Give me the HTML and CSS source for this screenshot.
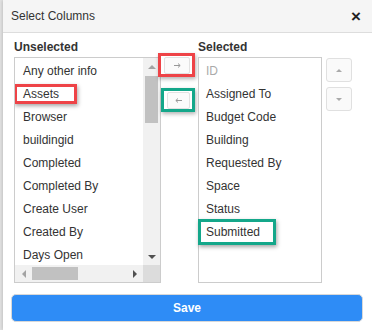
FILE: index.html
```html
<!DOCTYPE html>
<html lang="en">
<head>
  <meta charset="UTF-8" />
  <title>Select Columns</title>
  <link rel="stylesheet" href="styles.css">
</head>
<body>
  <div class="dialog">
    <!-- Header -->
    <div class="dialog__header">
      <span class="dialog__title">Select Columns</span>
      <button class="dialog__close">&times;</button>
    </div>

    <div class="dialog__body">
      <div class="picker">
        <div class="picker__label">Unselected</div>
        <div></div>
        <div class="picker__label picker__label--right">Selected</div>
        <div></div>

        <!-- Unselected list -->
        <div class="listbox listbox--scroll">
          <ul class="listbox__items">
            <li>Any other info</li>
            <li><span class="mark mark--red">Assets</span></li>
            <li>Browser</li>
            <li>buildingid</li>
            <li>Completed</li>
            <li>Completed By</li>
            <li>Create User</li>
            <li>Created By</li>
            <li>Days Open</li>
          </ul>
          <div class="vscroll">
            <div class="sb-btn"><span class="tri tri--up tri--off"></span></div>
            <div class="vscroll__track"><div class="vscroll__thumb"></div></div>
            <div class="sb-btn"><span class="tri tri--down"></span></div>
          </div>
          <div class="hscroll">
            <div class="sb-btn"><span class="tri tri--left tri--off"></span></div>
            <div class="hscroll__track"><div class="hscroll__thumb"></div></div>
            <div class="sb-btn"><span class="tri tri--right"></span></div>
          </div>
          <div class="scroll-corner"></div>
        </div>

        <!-- Move buttons -->
        <div class="move">
          <div class="mark-box mark-box--red">
            <button class="tool-btn">
              <svg width="7" height="5" viewBox="0 0 7 5"><path d="M0 2.5H6M4 0.5L6.2 2.5L4 4.5" fill="none" stroke="#999" stroke-width="1"/></svg>
            </button>
          </div>
          <div class="mark-box mark-box--green">
            <button class="tool-btn">
              <svg width="7" height="5" viewBox="0 0 7 5"><path d="M7 2.5H1M3 0.5L0.8 2.5L3 4.5" fill="none" stroke="#999" stroke-width="1"/></svg>
            </button>
          </div>
        </div>

        <!-- Selected list -->
        <div class="listbox listbox--plain">
          <ul class="listbox__items">
            <li class="is-locked">ID</li>
            <li>Assigned To</li>
            <li>Budget Code</li>
            <li>Building</li>
            <li>Requested By</li>
            <li>Space</li>
            <li>Status</li>
            <li><span class="mark mark--green">Submitted</span></li>
          </ul>
        </div>

        <!-- Order buttons -->
        <div class="order">
          <button class="order-btn"><span class="tri tri--up tri--small"></span></button>
          <button class="order-btn"><span class="tri tri--down tri--small"></span></button>
        </div>
      </div>

      <button class="save-btn">Save</button>
    </div>
  </div>
</body>
</html>
```

FILE: styles.css
```css
:root {
  --text-color: #333;
  --muted: #aaa;
  --border: #ccc;
  --header-bg: #f5f5f5;
  --red: #ee4347;
  --green: #14a78a;
  --blue: #2e8cf6;
  --sb-track: #f1f1f1;
  --sb-thumb: #c1c1c1;
}

body {
  margin: 0;
  background-color: #e3e3e3;
  font-family: 'Liberation Sans', Arial, sans-serif;
  font-size: 12px;
  color: var(--text-color);
}

.dialog {
  margin-left: 3px;
  height: 330px;
  background: #fff;
  box-shadow: -1px 0 3px rgba(0, 0, 0, 0.15);
}

.dialog__header {
  height: 32px;
  display: flex;
  align-items: center;
  justify-content: space-between;
  padding: 0 8px;
  background-color: var(--header-bg);
  border-bottom: 1px solid #ddd;
}

.dialog__title {
  font-size: 12px;
  color: var(--text-color);
}

.dialog__close {
  border: none;
  background: none;
  padding: 0;
  margin-right: 3px;
  font-family: 'Liberation Sans', Arial, sans-serif;
  font-size: 17px;
  font-weight: bold;
  line-height: 1;
  color: #222;
}

.dialog__body {
  padding: 7px 9px 0 8px;
}

.picker {
  display: grid;
  grid-template-columns: 147px 37px 124px 30px;
  margin-left: 3px;
}

.picker__label {
  font-weight: bold;
  line-height: 14px;
  margin-bottom: 3px;
}

.listbox {
  height: 226px;
  box-sizing: border-box;
  border: 1px solid var(--border);
  background: #fff;
}

.listbox--scroll {
  display: grid;
  grid-template-columns: 1fr 17px;
  grid-template-rows: 1fr 17px;
}

.listbox__items {
  list-style: none;
  margin: 0;
  padding: 1px 0 0;
  overflow: hidden;
}

.listbox--plain .listbox__items {
  overflow: visible;
}

.listbox__items li {
  height: 23px;
  display: flex;
  align-items: center;
  padding-left: 8px;
  white-space: nowrap;
}

.listbox--plain .listbox__items li {
  padding-left: 7px;
}

.listbox__items li.is-locked {
  color: var(--muted);
}

/* annotation boxes */
.mark {
  border: 3px solid;
  box-shadow: 1px 2px 4px rgba(0, 0, 0, 0.35);
}

.mark--red {
  border-color: var(--red);
  margin-left: -9px;
  padding: 0 15px 0 6px;
  line-height: 14px;
}

.mark--green {
  border-color: var(--green);
  margin-left: -8px;
  padding: 0 13px 0 5px;
  line-height: 20px;
}

/* fake scrollbars */
.vscroll,
.hscroll {
  display: flex;
  background: var(--sb-track);
}

.vscroll {
  flex-direction: column;
}

.sb-btn {
  width: 17px;
  height: 17px;
  flex: none;
  display: flex;
  align-items: center;
  justify-content: center;
}

.vscroll__track,
.hscroll__track {
  flex: 1;
}

.vscroll__thumb {
  margin: 1px 2px 0;
  height: 47px;
  background: var(--sb-thumb);
}

.hscroll__thumb {
  margin: 2px 0 0;
  width: 46px;
  height: 13px;
  background: var(--sb-thumb);
}

.scroll-corner {
  background: #dcdcdc;
}

.tri {
  width: 0;
  height: 0;
  border: 4px solid transparent;
}

.tri--up {
  border-top: 0;
  border-bottom-color: #505050;
}

.tri--down {
  border-bottom: 0;
  border-top-color: #505050;
}

.tri--left {
  border-left: 0;
  border-right-color: #505050;
}

.tri--right {
  border-right: 0;
  border-left-color: #505050;
}

.tri--off.tri--up { border-bottom-color: #a3a3a3; }
.tri--off.tri--left { border-right-color: #a3a3a3; }

.tri--small {
  border-width: 3px;
}

.tri--small.tri--up {
  border-top: 0;
  border-bottom-color: #aaa;
}

.tri--small.tri--down {
  border-bottom: 0;
  border-top-color: #aaa;
}

/* move buttons */
.move {
  display: flex;
  flex-direction: column;
}

.mark-box {
  box-sizing: border-box;
  height: 24px;
  border: 3px solid;
  box-shadow: 1px 2px 4px rgba(0, 0, 0, 0.3);
  display: flex;
}

.mark-box--red {
  width: 37px;
  margin: -4px 0 0 -3px;
  border-color: var(--red);
}

.mark-box--green {
  width: 34px;
  margin-top: 11px;
  border-color: var(--green);
}

.tool-btn {
  flex: 1;
  margin: 1px 2px 0 3px;
  padding: 0;
  border: 1px solid #e2e2e2;
  border-radius: 2px;
  background: #fbfbfb;
  display: flex;
  align-items: center;
  justify-content: center;
}

/* order buttons */
.order {
  display: flex;
  flex-direction: column;
  gap: 5px;
  padding: 1px 0 0 4px;
}

.order-btn {
  width: 26px;
  height: 24px;
  padding: 0;
  border: 1px solid #e0e0e0;
  border-radius: 3px;
  background: #fafafa;
  display: flex;
  align-items: center;
  justify-content: center;
}

.save-btn {
  display: block;
  width: 100%;
  height: 28px;
  margin-top: 11px;
  border: 1px solid #d8d8d8;
  border-radius: 5px;
  background-color: var(--blue);
  color: #fff;
  font-family: 'Liberation Sans', Arial, sans-serif;
  font-size: 12px;
  font-weight: bold;
}
```
